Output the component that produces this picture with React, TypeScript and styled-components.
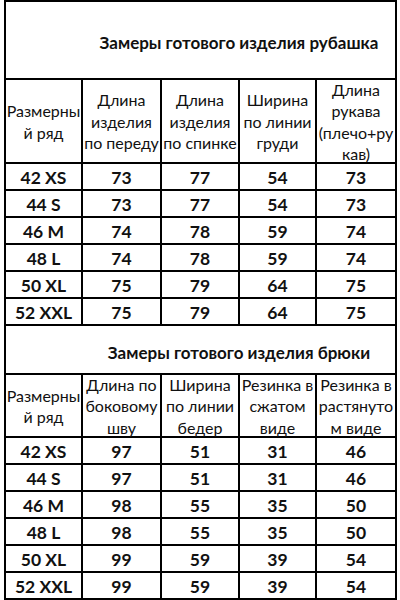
import React from "react";
import styled, { createGlobalStyle } from "styled-components";

const Global = createGlobalStyle`
  html, body { margin: 0; padding: 0; background: #fff; }
  body { font-family: Lato, "Open Sans", "Noto Sans", sans-serif; color: #111; }
`;

const Page = styled.div`
  width: 400px;
  height: 600px;
  padding-left: 4px;
  box-sizing: border-box;
  background: #fff;
`;

const Sheet = styled.div`
  width: 393px;
  display: grid;
  grid-template-columns: 75px 77px 76px 75px 78px;
  grid-template-rows: 76px 82px repeat(6, 25px) 47px 61px repeat(6, 25px);
  gap: 2px;
  padding: 2px;
  box-sizing: border-box;
  background: #000;
`;

const Title = styled.div<{ $shift?: number }>`
  grid-column: 1 / -1;
  background: #fff;
  display: flex;
  align-items: center;
  justify-content: center;
  padding-left: 77px;
  padding-top: ${(p) => p.$shift ?? 0}px;
  font-weight: 700;
  font-size: 17px;
`;

const Head = styled.div`
  background: #fff;
  display: flex;
  align-items: center;
  justify-content: center;
  text-align: center;
  font-size: 16px;
  line-height: 21.5px;
  white-space: nowrap;
  padding-top: 1px;
`;

const Cell = styled.div`
  background: #fff;
  display: flex;
  align-items: center;
  justify-content: center;
  font-weight: 700;
  font-size: 17.5px;
  padding-top: 1px;
`;

type Section = {
  title: string;
  shift: number;
  heads: string[][];
  rows: (string | number)[][];
};

const sizes = ["42 XS", "44 S", "46 M", "48 L", "50 XL", "52 XXL"];

const sections: Section[] = [
  {
    title: "Замеры готового изделия рубашка",
    shift: 4,
    heads: [
      ["Размерны", "й ряд"],
      ["Длина", "изделия", "по переду"],
      ["Длина", "изделия", "по спинке"],
      ["Ширина", "по линии", "груди"],
      ["Длина", "рукава", "(плечо+ру", "кав)"],
    ],
    rows: [
      [73, 77, 54, 73],
      [73, 77, 54, 73],
      [74, 78, 59, 74],
      [74, 78, 59, 74],
      [75, 79, 64, 75],
      [75, 79, 64, 75],
    ],
  },
  {
    title: "Замеры готового изделия брюки",
    shift: 6,
    heads: [
      ["Размерны", "й ряд"],
      ["Длина по", "боковому", "шву"],
      ["Ширина", "по линии", "бедер"],
      ["Резинка в", "сжатом", "виде"],
      ["Резинка в", "растянуто", "м виде"],
    ],
    rows: [
      [97, 51, 31, 46],
      [97, 51, 31, 46],
      [98, 55, 35, 50],
      [98, 55, 35, 50],
      [99, 59, 39, 54],
      [99, 59, 39, 54],
    ],
  },
];

export default function App() {
  return (
    <Page>
      <Global />
      <Sheet>
        {sections.map((s, si) => (
          <React.Fragment key={si}>
            <Title $shift={s.shift}>{s.title}</Title>
            {s.heads.map((h, hi) => (
              <Head key={`h${hi}`}>
                <div>
                  {h.map((line, li) => (
                    <div key={li}>{line}</div>
                  ))}
                </div>
              </Head>
            ))}
            {s.rows.map((r, ri) => (
              <React.Fragment key={`r${ri}`}>
                <Cell>{sizes[ri]}</Cell>
                {r.map((v, vi) => (
                  <Cell key={vi}>{v}</Cell>
                ))}
              </React.Fragment>
            ))}
          </React.Fragment>
        ))}
      </Sheet>
    </Page>
  );
}
